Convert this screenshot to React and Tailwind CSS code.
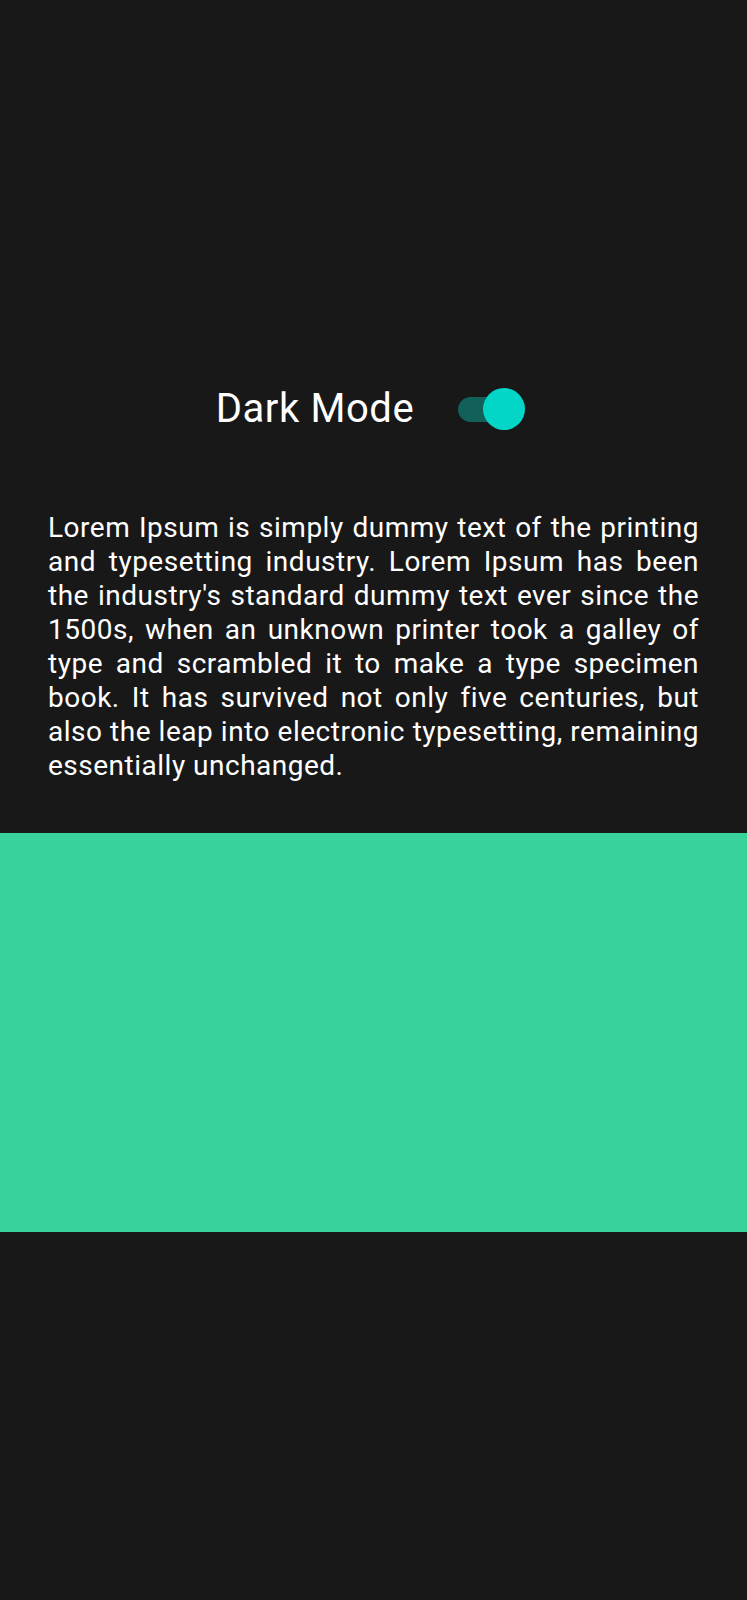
import React, { useState } from 'react';

const LOREM =
  "Lorem Ipsum is simply dummy text of the printing and typesetting industry. Lorem Ipsum has been the industry's standard dummy text ever since the 1500s, when an unknown printer took a galley of type and scrambled it to make a type specimen book. It has survived not only five centuries, but also the leap into electronic typesetting, remaining essentially unchanged.";

function Switch({ on, onToggle }) {
  return (
    <button
      onClick={onToggle}
      className="relative w-[67px] h-[42px] shrink-0"
      aria-pressed={on}
    >
      <span className="absolute left-0 top-[9px] w-[60px] h-[25px] rounded-full bg-[#12605a]" />
      <span className="absolute right-0 top-0 w-[42px] h-[42px] rounded-full bg-[#03d6c6]" />
    </button>
  );
}

export default function App() {
  const [dark, setDark] = useState(true);

  return (
    <div className="min-h-[1600px] w-full bg-[#181818] flex flex-col font-['Roboto',sans-serif] text-white">
      <div className="pt-[388px] pr-[6px] flex items-center justify-center gap-[44px]">
        <span className="text-[40px] leading-[42px] tracking-[0.6px]">Dark Mode</span>
        <Switch on={dark} onToggle={() => setDark(!dark)} />
      </div>

      <p className="mt-[81px] px-[48px] text-[28px] leading-[34px] tracking-[0.5px] text-justify">
        {LOREM}
      </p>

      <div className="mt-[50px] h-[399px] bg-[#37d39b]" />
    </div>
  );
}
